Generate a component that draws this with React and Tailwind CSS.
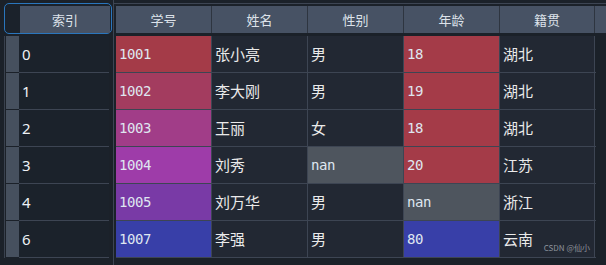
import React from 'react';

const cols = ['学号', '姓名', '性别', '年龄', '籍贯'];

const rows = [
  { idx: '0', id: '1001', idBg: 'bg-[#a43b48]', name: '张小亮', sex: '男', age: '18', ageBg: 'bg-[#a43b48]', home: '湖北' },
  { idx: '1', id: '1002', idBg: 'bg-[#a33c5f]', name: '李大刚', sex: '男', age: '19', ageBg: 'bg-[#a43b48]', home: '湖北' },
  { idx: '2', id: '1003', idBg: 'bg-[#a13d88]', name: '王丽', sex: '女', age: '18', ageBg: 'bg-[#a43b48]', home: '湖北' },
  { idx: '3', id: '1004', idBg: 'bg-[#9e3ca9]', name: '刘秀', sex: 'nan', age: '20', ageBg: 'bg-[#a43b48]', home: '江苏' },
  { idx: '4', id: '1005', idBg: 'bg-[#793aa6]', name: '刘万华', sex: '男', age: 'nan', ageBg: 'bg-[#4e555e]', home: '浙江' },
  { idx: '6', id: '1007', idBg: 'bg-[#383fa8]', name: '李强', sex: '男', age: '80', ageBg: 'bg-[#383fa8]', home: '云南' },
];

const mono = "font-['DejaVu_Sans_Mono','Liberation_Mono',monospace] text-[14px] tracking-[-0.4px]";
const cjk = "font-['Noto_Sans_CJK_SC','Noto_Sans',sans-serif] text-[15px]";

const Cell = ({ bg = 'bg-[#222833]', children, isMono, w = 'w-[96px]' }) => (
  <div className={`${w} h-full shrink-0 flex items-center pl-[3px] border-r border-[#3d4553] ${bg} ${isMono ? mono + ' text-[#dfe6f0]' : cjk + ' text-[#eaeaea]'}`}>
    {children}
  </div>
);

export default function App() {
  return (
    <div className="w-[606px] h-[265px] bg-[#1b2129] flex overflow-hidden">
      {/* index panel */}
      <div className="ml-[4px] w-[108px] shrink-0 flex flex-col">
        <div className="mt-[3px] h-[31px] rounded-[5px] border border-[#2a76bd] flex pt-[2px] bg-[#1b222b]">
          <div className="w-[15px]" />
          <div className="flex-1 mr-[1px] bg-[#475264] flex items-center justify-center text-[13px] text-[#dde2ea] font-['Noto_Sans_CJK_SC',sans-serif]">
            索引
          </div>
        </div>
        <div className="mt-[2px] flex flex-col border-l border-[#39414e] pl-[1px]">
          {rows.map((r) => (
            <div key={r.idx} className="h-[37px] flex">
              <div className="w-[13px] bg-[#46505e] border-b border-[#1b2129]" />
              <div className="w-[90px] bg-[#1b222b] border-b border-[#3d4553] flex items-center pl-[3px] text-[15px] text-[#eef2f6] font-['Noto_Sans',sans-serif]">
                {r.idx}
              </div>
            </div>
          ))}
        </div>
      </div>

      {/* data panel */}
      <div className="ml-[1px] flex-1 flex flex-col border-l border-[#3d4553] pl-[2px]">
        <div className="mt-[3px] h-px bg-[#3d4553] -ml-[3px]" />
        <div className="mt-[2px] h-[27px] flex bg-[#475264]">
          {cols.map((c, i) => (
            <div
              key={c}
              className={`${i === 4 ? 'w-[95px]' : 'w-[96px]'} shrink-0 border-r border-[#2e3540] flex items-center justify-center text-[13px] text-[#dde2ea] font-['Noto_Sans_CJK_SC',sans-serif]`}
            >
              {c}
            </div>
          ))}
        </div>
        <div className="mt-[3px] flex flex-col w-[480px] relative">
          {rows.map((r) => (
            <div key={r.idx} className="h-[37px] flex border-b border-[#3d4553]">
              <Cell bg={r.idBg} isMono>{r.id}</Cell>
              <Cell>{r.name}</Cell>
              {r.sex === 'nan' ? <Cell bg="bg-[#4e555e]" isMono>nan</Cell> : <Cell>{r.sex}</Cell>}
              <Cell bg={r.ageBg} isMono>{r.age}</Cell>
              <Cell w="w-[95px]">{r.home}</Cell>
            </div>
          ))}
          <div className="absolute right-[6px] bottom-[6px] text-[8px] text-[#8d939c] font-['Noto_Sans_CJK_SC',sans-serif] leading-none">
            CSDN @仙小
          </div>
        </div>
      </div>
    </div>
  );
}
